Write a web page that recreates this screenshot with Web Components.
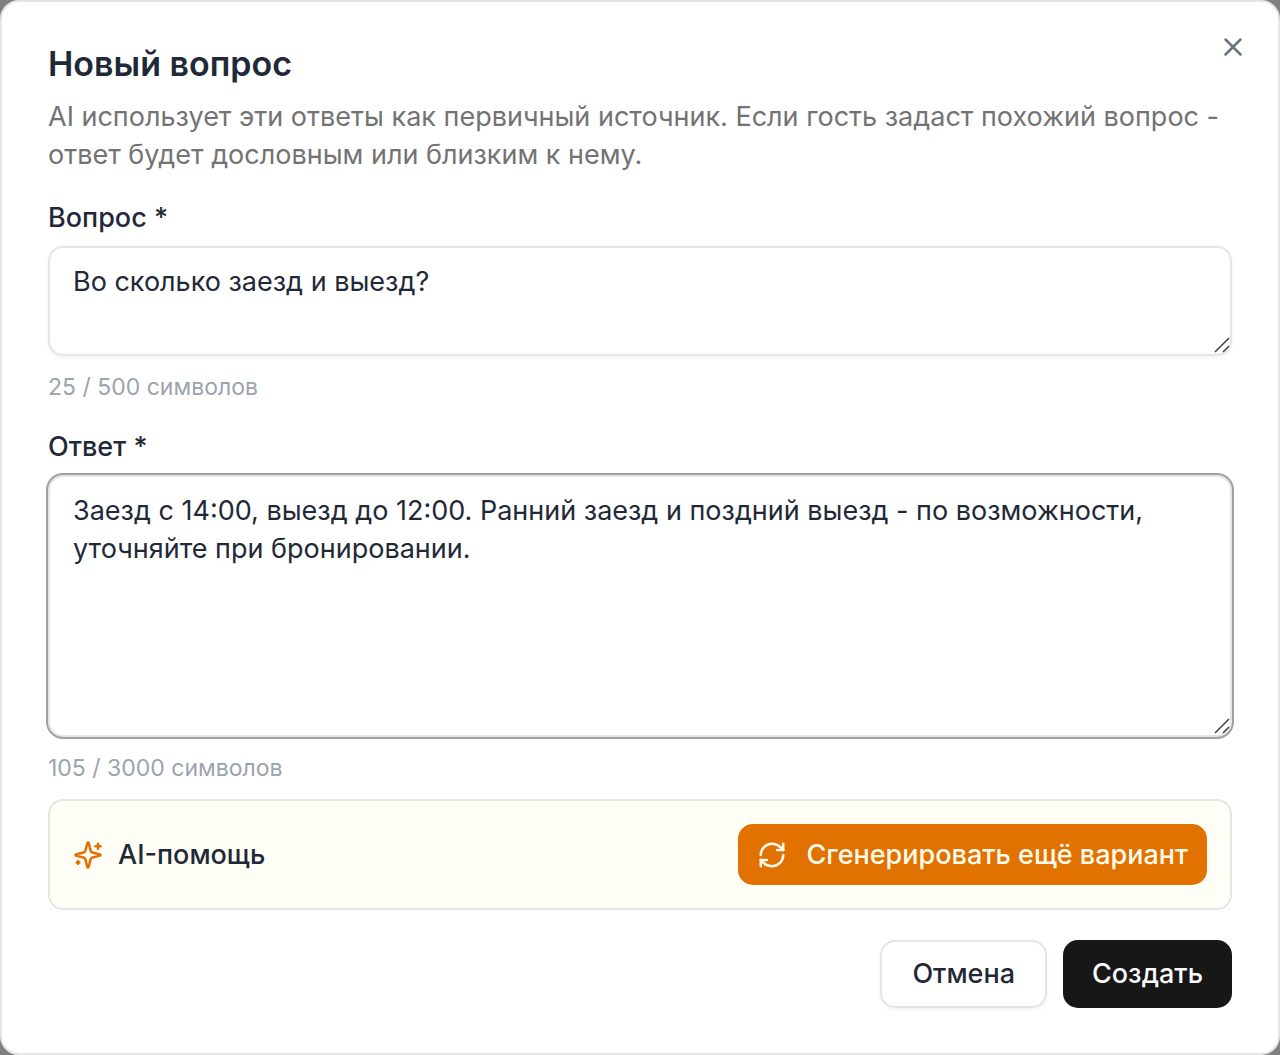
<!DOCTYPE html>
<html lang="ru">
<head>
<meta charset="utf-8">
<meta name="viewport" content="width=device-width, initial-scale=1">
<title>Новый вопрос</title>
<style>
body {
  margin: 0;
  background: #808080;
  font-family: Inter, "Noto Sans", sans-serif;
  font-size: 27px;
  line-height: 38px;
  color: #1f2937;
}
</style>
</head>
<body>

<faq-dialog>
  <span slot="title">Новый вопрос</span>
  <span slot="description">AI использует эти ответы как первичный источник. Если гость задаст похожий вопрос - ответ будет дословным или близким к нему.</span>

  <text-field label="Вопрос *" rows="2" max="500">Во сколько заезд и выезд?</text-field>
  <div>
    <text-field label="Ответ *" rows="6" max="3000" active>Заезд с 14:00, выезд до 12:00. Ранний заезд и поздний выезд - по возможности, уточняйте при бронировании.</text-field>
    <ai-helper>
      AI-помощь
      <ui-button slot="action" variant="accent"><ui-icon name="refresh"></ui-icon>Сгенерировать ещё вариант</ui-button>
    </ai-helper>
  </div>

  <ui-button slot="footer" variant="outline">Отмена</ui-button>
  <ui-button slot="footer" variant="primary">Создать</ui-button>
</faq-dialog>

<script>
const icons = {
  close: '<path d="M18 6 6 18M6 6l12 12"/>',
  refresh: '<path d="M3 12a9 9 0 0 1 9-9 9.75 9.75 0 0 1 6.74 2.74L21 8"/><path d="M21 3v5h-5"/><path d="M21 12a9 9 0 0 1-9 9 9.75 9.75 0 0 1-6.74-2.74L3 16"/><path d="M8 16H3v5"/>',
  sparkles: '<path d="M9.937 15.5A2 2 0 0 0 8.5 14.063l-6.135-1.582a.5.5 0 0 1 0-.962L8.5 9.936A2 2 0 0 0 9.937 8.5l1.582-6.135a.5.5 0 0 1 .963 0L14.063 8.5A2 2 0 0 0 15.5 9.937l6.135 1.581a.5.5 0 0 1 0 .964L15.5 14.063a2 2 0 0 0-1.437 1.437l-1.582 6.135a.5.5 0 0 1-.963 0z"/><path d="M20 3v4"/><path d="M22 5h-4"/><path d="M4 17v2"/><path d="M5 18H3"/>'
}

customElements.define('ui-icon',
  /**
   * Line icon, coloured by the current text colour.
   */
  class extends HTMLElement {
    constructor () {
      super()
      this.attachShadow({ mode: 'open' })
    }

    connectedCallback () {
      this.shadowRoot.innerHTML = `
        <style>
          :host { display: block; flex: none; width: 30px; height: 30px; }
          svg { display: block; width: 100%; height: 100%; }
        </style>
        <svg viewBox="0 0 24 24" fill="none" stroke="currentColor" stroke-width="2" stroke-linecap="round" stroke-linejoin="round" aria-hidden="true">${icons[this.getAttribute('name')]}</svg>
      `
    }
  }
)

const buttonTemplate = document.createElement('template')
buttonTemplate.innerHTML = `
<style>
:host {
  display: block;
}
button {
  display: flex;
  align-items: center;
  justify-content: center;
  gap: 19px;
  box-sizing: border-box;
  width: 100%;
  height: 68px;
  margin: 0;
  padding: 0 29px;
  border: 0;
  border-radius: 15px;
  font: inherit;
  font-weight: 500;
  white-space: nowrap;
  cursor: pointer;
}
:host([variant="primary"]) button {
  background: #171717;
  color: #fafafa;
}
:host([variant="outline"]) button {
  padding: 0 30px;
  border: 2px solid #e5e5e5;
  background: #fff;
  color: #1f2937;
  box-shadow: 0 2px 4px rgba(0, 0, 0, .05);
}
:host([variant="accent"]) button {
  height: 61px;
  padding: 0 19px;
  background: #e17100;
  color: #fffbeb;
}
</style>

<button type="button"><slot></slot></button>
`
customElements.define('ui-button',
  /**
   * Button with the variants primary, outline and accent.
   */
  class extends HTMLElement {
    constructor () {
      super()
      this.attachShadow({ mode: 'open' })
        .appendChild(buttonTemplate.content.cloneNode(true))
    }
  }
)

const fieldTemplate = document.createElement('template')
fieldTemplate.innerHTML = `
<style>
:host {
  display: flex;
  flex-direction: column;
  gap: 15px;
}
label {
  line-height: 27px;
  font-weight: 500;
}
.box {
  display: flex;
  position: relative;
}
textarea {
  display: block;
  box-sizing: border-box;
  width: 100%;
  margin: 0;
  padding: 15px 23px;
  border: 2px solid #e5e5e5;
  border-radius: 15px;
  outline: none;
  background: #fff;
  color: inherit;
  font: inherit;
  resize: vertical;
  overflow: auto;
  box-shadow: 0 2px 4px rgba(0, 0, 0, .05);
}
:host([active]) textarea,
textarea:focus {
  box-shadow: 0 0 0 2px #a1a1a1;
}
textarea::-webkit-resizer {
  display: none;
}
.grip {
  position: absolute;
  right: 2px;
  bottom: 3px;
  width: 16px;
  height: 16px;
  pointer-events: none;
}
.counter {
  font-size: 23px;
  line-height: 32px;
  color: #9ca3af;
}
</style>

<label for="text"></label>
<div class="box">
  <textarea id="text"></textarea>
  <svg class="grip" viewBox="0 0 16 16" stroke="#404040" stroke-width="1.5" aria-hidden="true"><path d="M1 15 15 1M9 15l6-6"/></svg>
</div>
<div class="counter"></div>
`
customElements.define('text-field',
  /**
   * Labelled text area with a character counter.
   */
  class extends HTMLElement {
    constructor () {
      super()
      this.attachShadow({ mode: 'open' })
        .appendChild(fieldTemplate.content.cloneNode(true))
      this.area = this.shadowRoot.querySelector('textarea')
      this.counter = this.shadowRoot.querySelector('.counter')
      this.area.addEventListener('input', () => this.count())
    }

    connectedCallback () {
      this.shadowRoot.querySelector('label').textContent = this.getAttribute('label')
      this.area.rows = this.getAttribute('rows')
      this.area.maxLength = this.getAttribute('max')
      this.area.value = this.textContent.trim()
      this.count()
    }

    /**
     * Updates the counter below the text area.
     */
    count () {
      this.counter.textContent = `${this.area.value.length} / ${this.getAttribute('max')} символов`
    }
  }
)

const helperTemplate = document.createElement('template')
helperTemplate.innerHTML = `
<style>
:host {
  display: flex;
  align-items: center;
  justify-content: space-between;
  gap: 15px;
  margin-top: 15px;
  padding: 23px;
  border: 2px solid #e5e5e5;
  border-radius: 15px;
  background: #fffef6;
}
.title {
  display: flex;
  align-items: center;
  gap: 15px;
  font-weight: 500;
}
ui-icon {
  color: #e17100;
}
</style>

<div class="title"><ui-icon name="sparkles"></ui-icon><span><slot></slot></span></div>
<slot name="action"></slot>
`
customElements.define('ai-helper',
  /**
   * Panel that offers a generated answer.
   */
  class extends HTMLElement {
    constructor () {
      super()
      this.attachShadow({ mode: 'open' })
        .appendChild(helperTemplate.content.cloneNode(true))
    }
  }
)

const dialogTemplate = document.createElement('template')
dialogTemplate.innerHTML = `
<style>
:host {
  display: block;
}
section {
  display: flex;
  flex-direction: column;
  gap: 30px;
  position: relative;
  box-sizing: border-box;
  min-height: 100vh;
  padding: 45px 46px;
  border: 2px solid #e5e5e5;
  border-radius: 19px;
  background: #fff;
}
header {
  display: flex;
  flex-direction: column;
  gap: 17px;
}
h2 {
  margin: 0;
  font-size: 34px;
  line-height: 34px;
  font-weight: 600;
}
p {
  margin: 0;
  color: #737373;
}
footer {
  display: flex;
  justify-content: flex-end;
  gap: 16px;
}
.close {
  position: absolute;
  top: 30px;
  right: 30px;
  padding: 0;
  border: 0;
  background: none;
  color: #6b7280;
  cursor: pointer;
}
</style>

<section role="dialog" aria-labelledby="title">
  <header>
    <h2 id="title"><slot name="title"></slot></h2>
    <p><slot name="description"></slot></p>
  </header>
  <slot></slot>
  <footer><slot name="footer"></slot></footer>
  <button class="close" type="button" aria-label="Закрыть"><ui-icon name="close"></ui-icon></button>
</section>
`
customElements.define('faq-dialog',
  /**
   * Dialog with a title, a description, fields and a footer.
   */
  class extends HTMLElement {
    constructor () {
      super()
      this.attachShadow({ mode: 'open' })
        .appendChild(dialogTemplate.content.cloneNode(true))
      this.shadowRoot.querySelector('.close')
        .addEventListener('click', () => this.remove())
    }
  }
)
</script>
</body>
</html>
